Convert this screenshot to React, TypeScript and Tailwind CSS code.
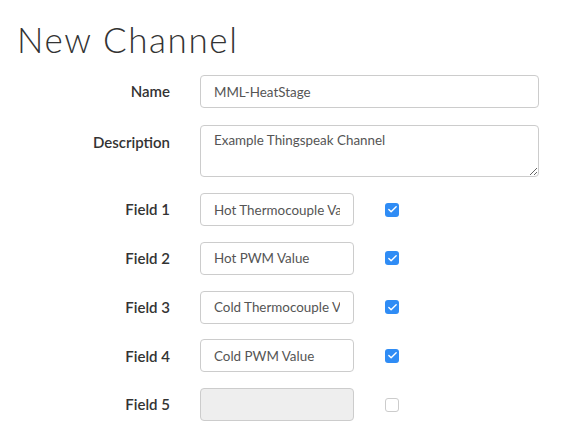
import { Check } from 'lucide-react';

interface FieldRow {
  label: string;
  value: string;
  enabled: boolean;
}

const fields: FieldRow[] = [
  { label: 'Field 1', value: 'Hot Thermocouple Value', enabled: true },
  { label: 'Field 2', value: 'Hot PWM Value', enabled: true },
  { label: 'Field 3', value: 'Cold Thermocouple Value', enabled: true },
  { label: 'Field 4', value: 'Cold PWM Value', enabled: true },
  { label: 'Field 5', value: '', enabled: false },
];

const labelCls = "w-[153px] shrink-0 text-right text-[15px] font-semibold text-[#333]";
const inputCls =
  "h-[33px] rounded-[4px] border border-[#ccc] px-[13px] text-[13.4px] text-[#555] outline-none font-['Lato',sans-serif]";

function CheckBox({ checked }: { checked: boolean }) {
  return checked ? (
    <div className="w-[14px] h-[14px] rounded-[3px] bg-[#2f8cf5] flex items-center justify-center">
      <Check size={11} strokeWidth={3} className="text-white" />
    </div>
  ) : (
    <div className="w-[14px] h-[14px] rounded-[3px] border border-[#ccc] bg-white" />
  );
}

export default function App() {
  return (
    <div className="w-[566px] h-[445px] bg-white font-['Lato',sans-serif] pl-[17px] pt-[16px] overflow-hidden">
      <h1 className="text-[35px] font-light text-[#333] leading-[46px] tracking-[1.6px]">New Channel</h1>

      <div className="mt-[13px] flex flex-col">
        <div className="flex items-center gap-[30px]">
          <div className={labelCls}>Name</div>
          <input readOnly value="MML-HeatStage" className={`${inputCls} w-[339px] h-[32px]`} />
        </div>

        <div className="mt-[17px] flex items-start gap-[30px]">
          <div className={`${labelCls} pt-[6px]`}>Description</div>
          <textarea
            readOnly
            value="Example Thingspeak Channel"
            className={`${inputCls} w-[339px] h-[52px] py-[4px] resize-y`}
          />
        </div>

        <div className="mt-[16px] flex flex-col gap-[15.75px]">
          {fields.map((f) => (
            <div key={f.label} className="flex items-center gap-[30px]">
              <div className={labelCls}>{f.label}</div>
              <input
                readOnly
                value={f.value}
                className={`${inputCls} w-[154px] ${f.enabled ? 'bg-white' : 'bg-[#eee]'}`}
              />
              <div className="ml-[1px]">
                <CheckBox checked={f.enabled} />
              </div>
            </div>
          ))}
        </div>
      </div>
    </div>
  );
}
